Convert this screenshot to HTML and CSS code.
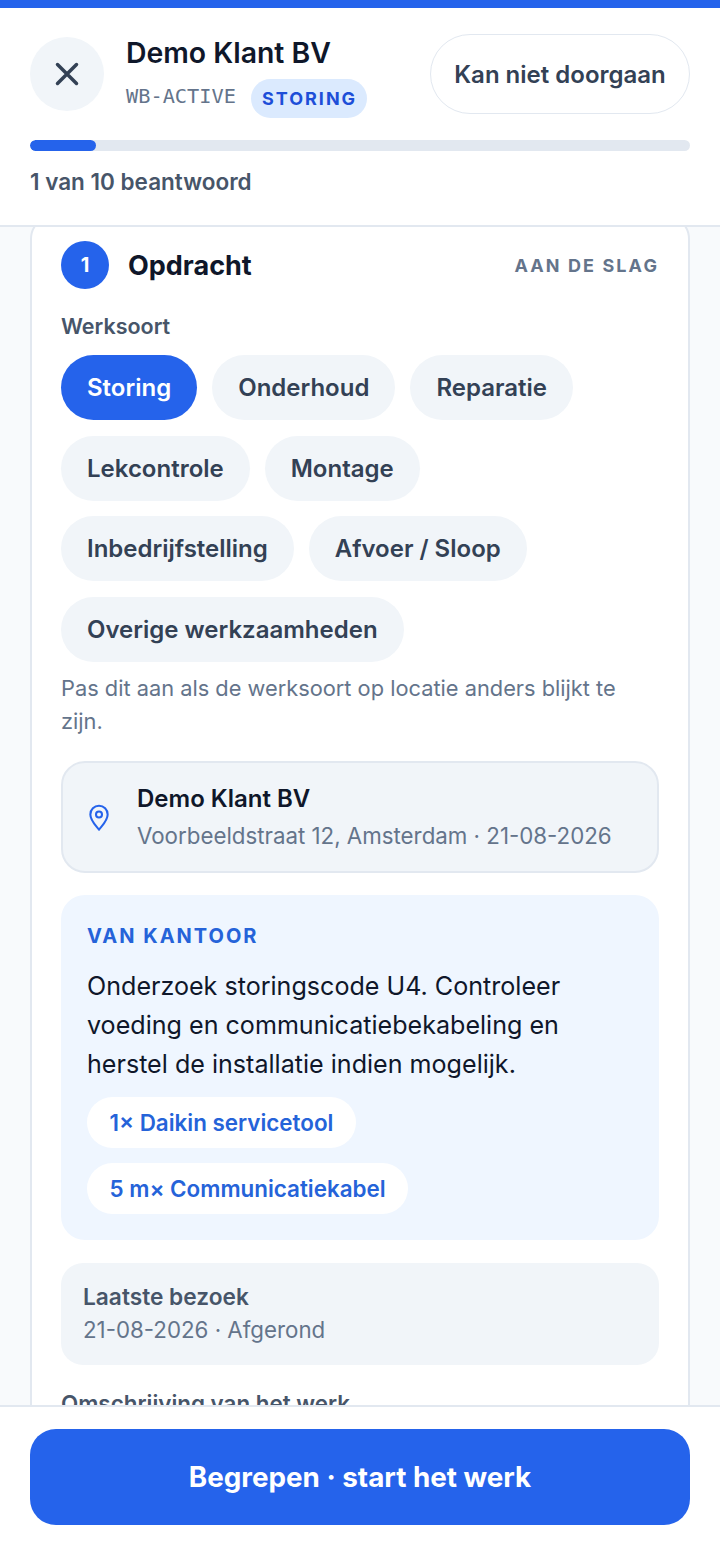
FILE: index.html
```html
<!DOCTYPE html>
<html lang="nl">
<head>
  <meta charset="UTF-8" />
  <meta name="viewport" content="width=device-width, initial-scale=1" />
  <title>Werkbon</title>
  <link rel="stylesheet" href="styles.css">
</head>
<body>
  <div class="app">
    <header class="top">
      <div class="top-row">
        <button class="close-btn" aria-label="Sluiten">
          <svg width="30" height="30" viewBox="0 0 30 30" fill="none" stroke="#334155" stroke-width="3.500" stroke-linecap="round"><path d="M5.500 5.500l19 19M24.500 5.500l-19 19"/></svg>
        </button>
        <div class="job">
          <div class="job-name">Demo Klant BV</div>
          <div class="job-meta">
            <span class="job-code">WB-ACTIVE</span>
            <span class="job-tag">STORING</span>
          </div>
        </div>
        <button class="skip-btn">Kan niet doorgaan</button>
      </div>
      <div class="progress"><div class="progress-fill" style="width:10%"></div></div>
      <div class="progress-text">1 van 10 beantwoord</div>
    </header>

    <main class="content">
      <section class="card">
        <div class="card-head">
          <span class="step-num">1</span>
          <h2 class="step-title">Opdracht</h2>
          <span class="step-hint">AAN DE SLAG</span>
        </div>

        <div class="field-label">Werksoort</div>
        <div class="chips">
          <button class="chip chip-active">Storing</button>
          <button class="chip">Onderhoud</button>
          <button class="chip">Reparatie</button>
          <button class="chip">Lekcontrole</button>
          <button class="chip">Montage</button>
          <button class="chip">Inbedrijfstelling</button>
          <button class="chip">Afvoer / Sloop</button>
          <button class="chip">Overige werkzaamheden</button>
        </div>
        <p class="help">Pas dit aan als de werksoort op locatie anders blijkt te zijn.</p>

        <div class="location">
          <svg class="pin" width="30" height="30" viewBox="0 0 26 26" fill="none" stroke="#2563eb" stroke-width="1.800" stroke-linejoin="round"><path d="M13 24c-1.400-2.300-7.500-7.500-7.500-13.200a7.500 7.500 0 0 1 15 0C20.500 16.500 14.400 21.700 13 24z"/><circle cx="13" cy="10.800" r="2.600"/></svg>
          <div>
            <div class="location-name">Demo Klant BV</div>
            <div class="location-sub">Voorbeeldstraat 12, Amsterdam · 21-08-2026</div>
          </div>
        </div>

        <div class="office">
          <div class="office-label">VAN KANTOOR</div>
          <p class="office-text">Onderzoek storingscode U4. Controleer voeding en communicatiebekabeling en herstel de installatie indien mogelijk.</p>
          <div class="materials">
            <span class="material">1× Daikin servicetool</span>
            <span class="material">5 m× Communicatiekabel</span>
          </div>
        </div>

        <div class="last-visit">
          <div class="last-title">Laatste bezoek</div>
          <div class="last-sub">21-08-2026 · Afgerond</div>
        </div>

        <div class="field-label desc-label">Omschrijving van het werk</div>
      </section>
    </main>

    <footer class="bottom">
      <button class="primary-btn">Begrepen · start het werk</button>
    </footer>
  </div>
</body>
</html>
```
FILE: styles.css
```css
:root {
  --blue: #2563eb;
  --blue-text: #2563d9;
  --ink: #0f172a;
  --slate: #334155;
  --slate-mid: #475569;
  --slate-light: #64748b;
  --line: #e2e8f0;
  --soft: #f1f5f9;
}

* {
  box-sizing: border-box;
}

body {
  margin: 0;
  font-family: Inter, "Noto Sans", sans-serif;
  color: var(--ink);
  background: #fff;
}

button {
  font-family: inherit;
  border: none;
  padding: 0;
}

.app {
  height: 1558px;
  display: flex;
  flex-direction: column;
  border-top: 8px solid var(--blue);
}

/* Header */
.top {
  background: #fff;
  padding: 26px 30px 0;
  height: 219px;
  border-bottom: 2px solid var(--line);
  flex-shrink: 0;
}

.top-row {
  display: flex;
  align-items: flex-start;
}

.close-btn {
  width: 74px;
  height: 74px;
  margin-top: 3px;
  border-radius: 50%;
  background: var(--soft);
  display: flex;
  align-items: center;
  justify-content: center;
  flex-shrink: 0;
}

.job {
  margin-left: 22px;
  flex: 1;
}

.job-name {
  font-size: 28.400px;
  font-weight: 600;
  line-height: 38px;
}

.job-meta {
  display: flex;
  align-items: center;
  margin-top: 7px;
}

.job-code {
  font-family: "DejaVu Sans Mono", monospace;
  font-size: 20.300px;
  color: var(--slate-light);
  position: relative;
  top: -3px;
}

.job-tag {
  margin-left: 15px;
  background: #dbeafe;
  color: #1d4ed8;
  font-size: 18px;
  font-weight: 700;
  letter-spacing: 2px;
  height: 39px;
  line-height: 40px;
  padding: 0 10px 0 11px;
  border-radius: 20px;
}

.skip-btn {
  width: 260px;
  height: 80px;
  border: 1.500px solid var(--line);
  border-radius: 40px;
  background: #fff;
  color: var(--slate);
  font-size: 24px;
  font-weight: 600;
}

.progress {
  margin-top: 22px;
  height: 11px;
  border-radius: 6px;
  background: var(--line);
  overflow: hidden;
}

.progress-fill {
  height: 100%;
  background: var(--blue);
  border-radius: 6px;
}

.progress-text {
  margin-top: 16px;
  font-size: 22.500px;
  font-weight: 600;
  line-height: 30px;
  color: var(--slate-mid);
}

/* Scrolling part */
.content {
  flex: 1;
  min-height: 0;
  overflow: hidden;
  background: #f8fafc;
  padding: 0 30px;
}

.card {
  margin-top: -12px;
  background: #fff;
  border: 2px solid var(--line);
  border-radius: 24px;
  padding: 24px 29px 40px;
}

.card-head {
  display: flex;
  align-items: center;
}

.step-num {
  width: 48px;
  height: 48px;
  border-radius: 50%;
  background: var(--blue);
  color: #fff;
  font-size: 20px;
  font-weight: 700;
  display: flex;
  align-items: center;
  justify-content: center;
}

.step-title {
  margin: 0 0 0 19px;
  font-size: 27px;
  font-weight: 700;
  flex: 1;
}

.step-hint {
  font-size: 18px;
  font-weight: 700;
  letter-spacing: 2.100px;
  color: var(--slate-light);
}

.field-label {
  margin-top: 22px;
  font-size: 21.500px;
  font-weight: 600;
  line-height: 30px;
  color: var(--slate-mid);
}

.chips {
  margin-top: 14px;
  display: flex;
  flex-wrap: wrap;
  gap: 15.500px 15px;
}

.chip {
  height: 65px;
  padding: 0 26px;
  border-radius: 33px;
  background: var(--soft);
  color: var(--slate);
  font-size: 24px;
  font-weight: 600;
}

.chip-active {
  background: var(--blue);
  color: #fff;
}

.help {
  margin: 10px 0 0;
  font-size: 21.800px;
  line-height: 33px;
  color: var(--slate-light);
}

.location {
  margin-top: 23px;
  height: 112px;
  background: var(--soft);
  border: 2px solid var(--line);
  border-radius: 24px;
  padding: 0 21px;
  display: flex;
  align-items: center;
  gap: 23px;
}

.pin {
  flex-shrink: 0;
}

.location-name {
  font-size: 24px;
  font-weight: 600;
  line-height: 34px;
}

.location-sub {
  margin-top: 4px;
  font-size: 22.300px;
  line-height: 32px;
  color: var(--slate-light);
}

.office {
  margin-top: 22px;
  background: #eff6ff;
  border-radius: 24px;
  padding: 27px 26px 26px;
}

.office-label {
  font-size: 20px;
  font-weight: 700;
  letter-spacing: 2px;
  line-height: 28px;
  color: var(--blue-text);
}

.office-text {
  margin: 17px 0 0;
  font-size: 25.100px;
  line-height: 39px;
}

.materials {
  margin-top: 13px;
  display: flex;
  flex-direction: column;
  align-items: flex-start;
  gap: 15px;
}

.material {
  height: 51px;
  line-height: 51px;
  padding: 0 22.500px;
  border-radius: 26px;
  background: #fff;
  color: var(--blue-text);
  font-size: 22.400px;
  font-weight: 600;
}

.last-visit {
  margin-top: 23px;
  height: 102px;
  background: var(--soft);
  border-radius: 22px;
  padding: 19px 22px;
}

.last-title {
  font-size: 22.700px;
  font-weight: 600;
  line-height: 30px;
  color: var(--slate-mid);
}

.last-sub {
  margin-top: 3px;
  font-size: 22.300px;
  line-height: 30px;
  color: var(--slate-light);
}

.field-label.desc-label {
  margin-top: 24px;
  font-size: 22.400px;
}

/* Bottom bar */
.bottom {
  height: 153px;
  background: #fff;
  border-top: 2px solid var(--line);
  padding: 22px 30px 0;
  flex-shrink: 0;
}

.primary-btn {
  width: 100%;
  height: 96px;
  border-radius: 26px;
  background: var(--blue);
  color: #fff;
  font-size: 27.800px;
  font-weight: 700;
}
```
